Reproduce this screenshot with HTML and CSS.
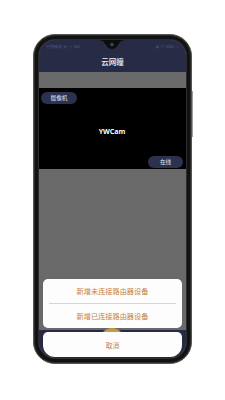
FILE: index.html
```html
<!DOCTYPE html>
<html lang="zh">
<head>
<meta charset="utf-8">
<link rel="stylesheet" href="styles.css">
</head>
<body>
<div class="phone">
  <span class="side-btn"></span>
  <div class="screen">
    <div class="top">
      <div class="status">
        <span class="st-left">中国移动 令 ◎ 4G</span>
        <span class="st-right">▣ ✉ 100 ▭</span>
      </div>
      <div class="title">云网瞳</div>
    </div>
    <div class="band"></div>
    <div class="video">
      <div class="video-row"><span class="pill">摄像机</span></div>
      <div class="cam-name">YWCam</div>
      <div class="video-row end"><span class="pill wide">在线</span></div>
    </div>
    <div class="rest"></div>
    <div class="tabbar"><span class="fab"></span></div>

    <svg class="notch" width="30" height="10" viewBox="0 0 30 10">
      <path d="M0 0 H30 C24 0 23 2 21 5 C19 8 17 9 15 9 C13 9 11 8 9 5 C7 2 6 0 0 0 Z" fill="#0d0d0f"/>
      <circle cx="15" cy="4.6" r="2" fill="#1b3a38"/>
      <circle cx="15" cy="4.6" r="0.9" fill="#3d6e66"/>
    </svg>

    <div class="sheet">
      <div class="group">
        <div class="item">新增未连接路由器设备</div>
        <div class="divider"></div>
        <div class="item">新增已连接路由器设备</div>
      </div>
      <div class="cancel">取消</div>
    </div>
  </div>
</div>
</body>
</html>
```

FILE: styles.css
```css
html, body {
  margin: 0;
  padding: 0;
  background: #ffffff;
}
body {
  width: 225px;
  height: 400px;
  font-family: "Noto Sans CJK SC", "Noto Sans", sans-serif;
}
.phone {
  position: relative;
  box-sizing: border-box;
  margin: 34px 0 0 33px;
  width: 159px;
  height: 330px;
  padding: 5px;
  border-radius: 22px;
  background: #121212;
  border: 1px solid #555555;
  box-shadow: inset 0 0 0 1px #2a2a2a;
}
.side-btn {
  position: absolute;
  right: -2px;
  top: 56px;
  width: 1px;
  height: 46px;
  background: #9a9a9a;
}
.screen {
  position: relative;
  width: 147px;
  height: 318px;
  border-radius: 16px;
  overflow: hidden;
  background: #696969;
  display: flex;
  flex-direction: column;
  box-shadow: 0 0 0 1px #2c2c2c;
}
.top {
  background: #272b45;
  height: 32px;
  flex: none;
  display: flex;
  flex-direction: column;
}
.status {
  display: flex;
  justify-content: space-between;
  padding: 4px 7px 0 7px;
  height: 6px;
  font-size: 4px;
  line-height: 6px;
  color: #434a6e;
  font-family: "DejaVu Sans", sans-serif;
  font-weight: bold;
}
.title {
  text-align: center;
  color: #f2f2f2;
  font-size: 7.5px;
  line-height: 10px;
  margin-top: 7px;
  font-weight: 500;
}
.band {
  height: 16px;
  flex: none;
  background: #6a6a6a;
}
.video {
  height: 81px;
  flex: none;
  background: #000000;
  display: flex;
  flex-direction: column;
  justify-content: space-between;
  padding: 4px 3px 1px 2px;
  box-sizing: border-box;
}
.video-row {
  display: flex;
}
.video-row.end {
  justify-content: flex-end;
}
.pill {
  display: flex;
  align-items: center;
  justify-content: center;
  width: 36px;
  height: 12px;
  border-radius: 6px;
  background: #2d3150;
  color: #e6e6ee;
  font-size: 5.6px;
}
.pill.wide {
  width: 35px;
}
.cam-name {
  text-align: center;
  color: #ffffff;
  font-family: "Open Sans", "Noto Sans", sans-serif;
  font-weight: 700;
  font-size: 7px;
  line-height: 10px;
  margin-top: 3px;
}
.rest {
  flex: 1;
  background: #696969;
}
.tabbar {
  position: relative;
  flex: none;
  height: 28px;
  background: #262a44;
}
.fab {
  position: absolute;
  left: 61px;
  top: -2px;
  width: 24px;
  height: 24px;
  border-radius: 50%;
  background: #c79a3a;
}
.notch {
  position: absolute;
  left: 58px;
  top: 0;
}
.sheet {
  position: absolute;
  left: 4px;
  right: 4px;
  bottom: 1px;
  display: flex;
  flex-direction: column;
  gap: 4px;
}
.group {
  background: #fdfdfd;
  border-radius: 5px;
  display: flex;
  flex-direction: column;
  height: 49px;
}
.item {
  flex: 1;
  display: flex;
  align-items: center;
  justify-content: center;
  color: #c47f45;
  font-size: 7.2px;
}
.divider {
  height: 1px;
  margin: 0 6px;
  background: #d6d6d6;
}
.cancel {
  height: 25px;
  background: #fdfdfd;
  border-radius: 5px 5px 12px 12px;
  display: flex;
  align-items: center;
  justify-content: center;
  color: #c47f45;
  font-size: 6.8px;
}
```
